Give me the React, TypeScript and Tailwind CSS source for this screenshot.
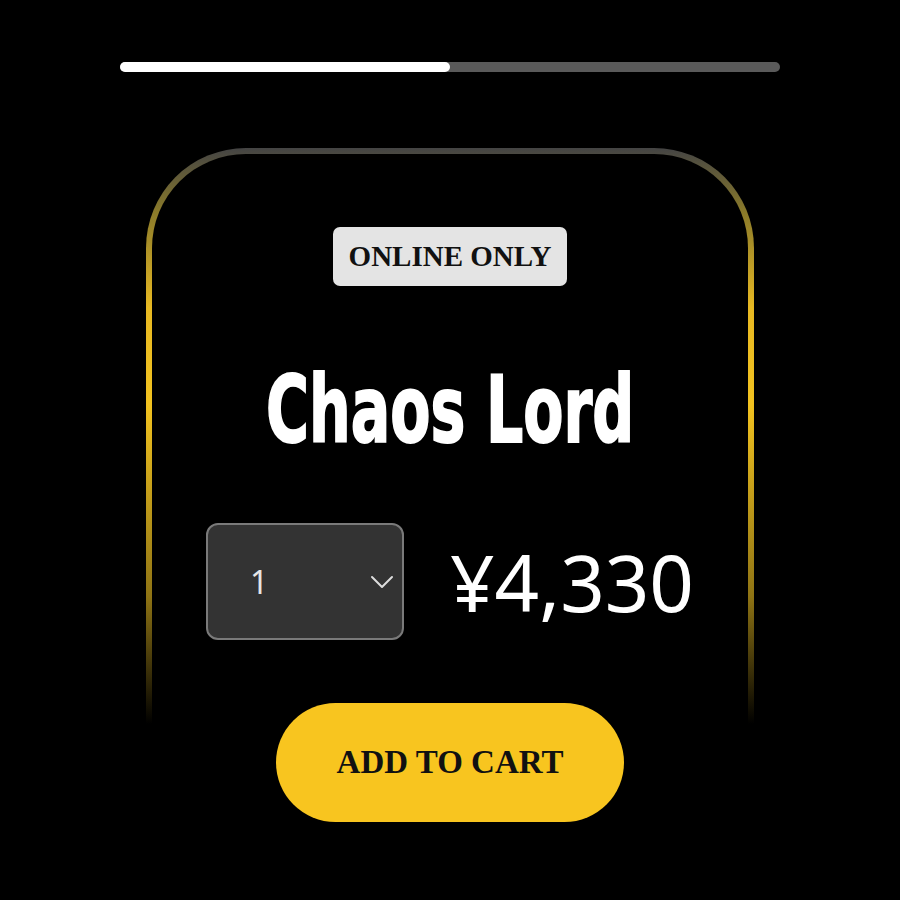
import { ChevronDown } from "lucide-react";

export default function App() {
  return (
    <div className="w-[900px] h-[900px] bg-black overflow-hidden flex flex-col items-center">
      {/* Progress */}
      <div className="mt-[62px] w-[660px] h-[10px] rounded-full bg-[#5a5a5a] flex">
        <div className="w-1/2 h-full rounded-full bg-white" />
      </div>

      {/* Card */}
      <div className="mt-[76px] w-[608px] h-[640px] rounded-t-[100px] p-[6px] pb-0 bg-[linear-gradient(to_bottom,#444444_0%,#8a7a2a_10%,#e8b922_25%,#f2c21f_40%,#8f7414_70%,#000000_90%)]">
        <div className="h-full rounded-t-[94px] bg-black flex flex-col items-center pt-[73px]">
          <div className="h-[59px] px-[16px] rounded-[7px] bg-[#e4e4e4] flex items-center">
            <span className="text-[29px] font-bold text-[#111] font-['Liberation_Serif',serif]">
              ONLINE ONLY
            </span>
          </div>

          <h1 className="mt-[78px] text-[93px] leading-none font-bold text-white inline-block scale-x-[0.63] [-webkit-text-stroke:2px_white] font-['DejaVu_Sans','Liberation_Sans',sans-serif] whitespace-nowrap">
            Chaos Lord
          </h1>

          <div className="mt-[66px] flex items-center gap-[46px]">
            <div className="w-[198px] h-[117px] rounded-[12px] border-2 border-[#7a7a7a] bg-[#333333] flex items-center justify-between pl-[42px] pr-0">
              <span className="text-[32px] text-[#e6e6e6] font-['Noto_Sans',sans-serif]">1</span>
              <ChevronDown className="w-[40px] h-[40px] text-[#dddddd]" strokeWidth={1.2} />
            </div>
            <span className="text-[78px] leading-none text-white font-['Noto_Sans',sans-serif]">
              ¥4,330
            </span>
          </div>
        </div>
      </div>

      {/* Button overlapping the faded card bottom */}
      <button className="-mt-[85px] w-[348px] h-[119px] rounded-full bg-[#f8c51f] flex items-center justify-center relative">
        <span className="text-[33px] font-bold text-[#111] font-['Liberation_Serif',serif]">
          ADD TO CART
        </span>
      </button>
    </div>
  );
}
